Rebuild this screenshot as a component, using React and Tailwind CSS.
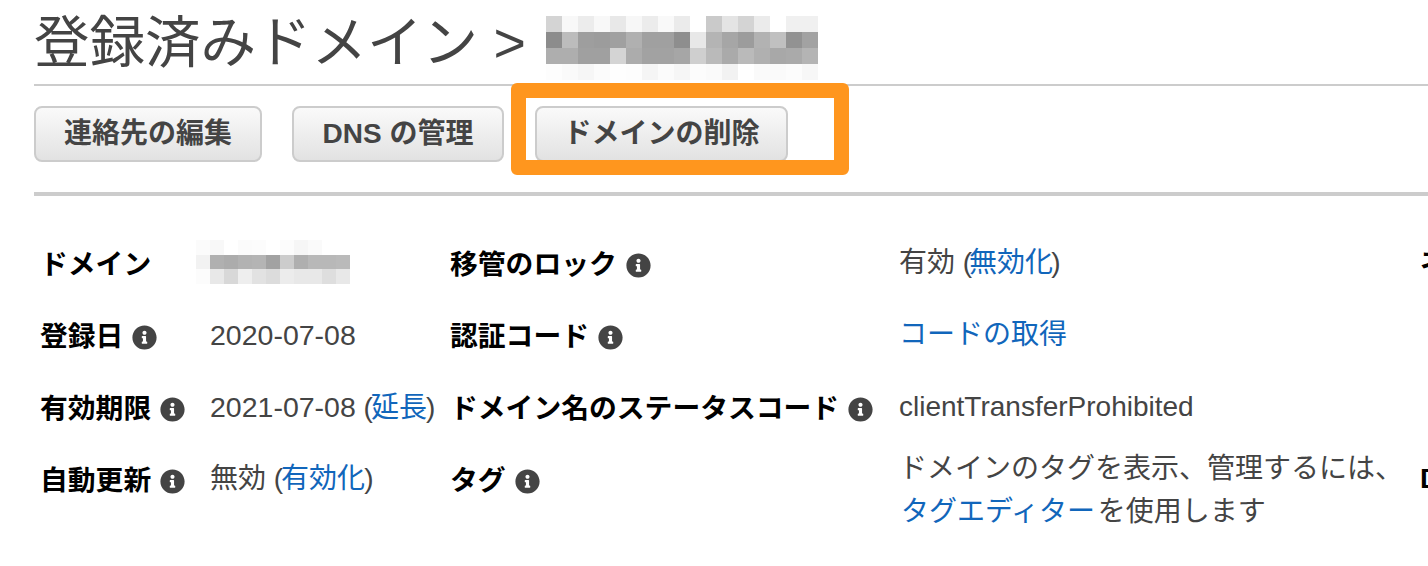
import React from 'react';
import { FaInfoCircle } from 'react-icons/fa';

const titleMosaic = [
  ['#d4d4d4', '#f8f8f8', '#ececec', '#f8f8f8', '#e8e8e8', '#f7f7f7', '#ececec', '#f9f9f9', '#ebebeb', '#ffffff', '#cacaca', '#e4e4e4', '#d4d4d4', '#ebebeb', '#ffffff', '#f0f0f0', '#f0f0f0'],
  ['#8c8c8c', '#bcbcbc', '#9e9e9e', '#9c9c9c', '#a0a0a0', '#b0b0b0', '#a0a0a0', '#a0a0a0', '#8e8e8e', '#e8e8e8', '#b4b4b4', '#a6a6a6', '#9c9c9c', '#b2b2b2', '#c0c0c0', '#929292', '#a2a2a2'],
  ['#aeaeae', '#aeaeae', '#a0a0a0', '#a0a0a0', '#d4d4d4', '#acacac', '#a2a2a2', '#a2a2a2', '#a6a6a6', '#cfcfcf', '#bababa', '#aaaaaa', '#bababa', '#b0b0b0', '#a8a8a8', '#aaaaaa', '#b4b4b4'],
  ['#fdfdfd', '#fafafa', '#f6f6f6', '#fbfbfb', '#fefefe', '#fdfdfd', '#f5f5f5', '#fbfbfb', '#f6f6f6', '#fcfcfc', '#fafafa', '#f2f2f2', '#ffffff', '#fafafa', '#fafafa', '#fcfcfc', '#f7f7f7'],
];

const domainMosaic = [
  ['#fbfbfb', '#f8f8f8', '#ffffff', '#fbfbfb', '#fcfcfc', '#ffffff', '#fcfcfc', '#f6f6f6', '#fafafa', '#ffffff', '#ffffff'],
  ['#f2f2f2', '#b0b0b0', '#acacac', '#b2b2b2', '#b4b4b4', '#a2a2a2', '#cccccc', '#afafaf', '#b8b8b8', '#b8b8b8', '#bababa'],
  ['#fcfcfc', '#e8e8e8', '#d8d8d8', '#eeeeee', '#e2e2e2', '#dcdcdc', '#ececec', '#e8e8e8', '#e8e8e8', '#dedede', '#e8e8e8'],
];

function Mosaic({ rows, cell, height }) {
  return (
    <svg width={rows[0].length * cell} height={rows.length * height} className="block" shapeRendering="crispEdges">
      {rows.map((row, y) =>
        row.map((color, x) => (
          <rect key={`${x}-${y}`} x={x * cell} y={y * height} width={cell} height={height} fill={color} />
        ))
      )}
    </svg>
  );
}

function ActionButton({ children, className }) {
  return (
    <button className={`h-[56px] rounded-lg border-2 border-[#cccccc] bg-gradient-to-b from-[#fafafa] to-[#e2e2e2] text-[28px] font-bold text-[#444444] ${className}`}>
      {children}
    </button>
  );
}

function Label({ children }) {
  return (
    <div className="-ml-px mt-[2px] flex h-[36px] items-center gap-[9px] whitespace-nowrap text-[27.8px] font-bold leading-[36px] text-black">
      {children}
    </div>
  );
}

function Info() {
  return <FaInfoCircle className="shrink-0 text-[25px] text-[#444444]" />;
}

function Link({ children, className = '' }) {
  return <a className={`text-[#1166bb] ${className}`}>{children}</a>;
}

export default function App() {
  return (
    <div className="h-[566px] w-[1428px] overflow-hidden bg-white pl-[34px] font-['Liberation_Sans','Noto_Sans_CJK_JP',sans-serif] text-[#444444]">
      <div className="flex h-[84px] items-start">
        <h1 className="mt-[11px] whitespace-nowrap text-[55.5px] font-normal leading-[64px] text-[#444444]">登録済みドメイン &gt;</h1>
        <div className="ml-[20px] mt-[16px]">
          <Mosaic rows={titleMosaic} cell={16} height={16} />
        </div>
      </div>
      <div className="h-[2px] bg-[#cccccc]" />

      <div className="relative flex h-[106px] items-start pt-[20px]">
        <ActionButton className="w-[228px]">連絡先の編集</ActionButton>
        <ActionButton className="ml-[30px] w-[212px]">DNS の管理</ActionButton>
        <ActionButton className="ml-[31px] w-[253px]">ドメインの削除</ActionButton>
        <div className="absolute left-[477px] top-[-3px] h-[92px] w-[338px] rounded-md border-[15px] border-[#ff961e]" />
      </div>
      <div className="h-[4px] bg-[#cccccc]" />

      <div className="mt-[49px] grid grid-cols-[169px_241px_448px_521px_40px] grid-rows-[72px_72px_72px_72px] pl-[7px] text-[28px] leading-[36px]">
        <Label>ドメイン</Label>
        <div className="-ml-[14px] mt-[-5px]">
          <Mosaic rows={domainMosaic} cell={14} height={14.5} />
        </div>
        <Label>移管のロック<Info /></Label>
        <div>有効 (<Link className="-ml-[3px] mr-[-2px]">無効化</Link>)</div>
        <div className="font-bold text-black">ネ</div>

        <Label>登録日<Info /></Label>
        <div className="text-[28.5px]">2020-07-08</div>
        <Label>認証コード<Info /></Label>
        <div><Link>コードの取得</Link></div>
        <div />

        <Label>有効期限<Info /></Label>
        <div className="whitespace-nowrap"><span className="text-[28.5px]">2021-07-08</span> (<Link className="-ml-[2px] mr-[-1px]">延長</Link>)</div>
        <Label>ドメイン名のステータスコード<Info /></Label>
        <div>clientTransferProhibited</div>
        <div />

        <Label>自動更新<Info /></Label>
        <div>無効 (<Link className="-ml-[2px] mr-[-1px]">有効化</Link>)</div>
        <Label>タグ<Info /></Label>
        <div className="mt-[-14px] whitespace-nowrap leading-[43px]">
          ドメインのタグを表示、管理するには、<br />
          <Link className="ml-[2px] mr-[-5px]">タグエディター</Link> を使用します
        </div>
        <div className="font-bold text-black">D</div>
      </div>
    </div>
  );
}
